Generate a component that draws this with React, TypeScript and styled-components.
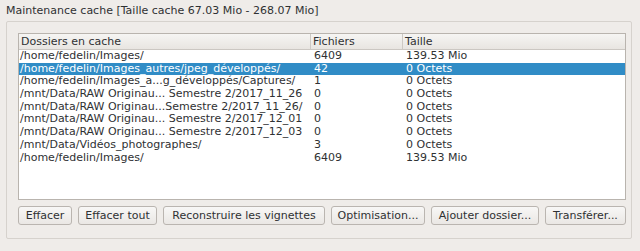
import React from 'react'
import styled, { createGlobalStyle } from 'styled-components'

const COLORS = {
  window: '#efece9',
  frame: '#d6d2cd',
  tableBorder: '#b9b4ae',
  text: '#2f3133',
  highlight: '#308cc6',
  headerTop: '#f6f5f3',
  headerBottom: '#e8e5e1',
}

const GlobalStyle = createGlobalStyle`
  html, body {
    margin: 0;
    padding: 0;
    background: ${COLORS.window};
  }
  body {
    font-family: "DejaVu Sans", "Noto Sans", sans-serif;
    font-size: 11px;
    color: ${COLORS.text};
  }
`

const Window = styled.div`
  width: 640px;
  height: 251px;
  box-sizing: border-box;
  padding: 4px 8px 0 6px;
  display: flex;
  flex-direction: column;
  overflow: hidden;
`

const Title = styled.div`
  height: 17px;
  line-height: 14px;
  white-space: nowrap;
`

const GroupBox = styled.div`
  height: 218px;
  box-sizing: border-box;
  border: 1px solid ${COLORS.frame};
  border-radius: 2px;
  padding: 11px 5px 0 11px;
  display: flex;
  flex-direction: column;
  gap: 6px;
`

const Table = styled.div`
  height: 167px;
  box-sizing: border-box;
  border: 1px solid ${COLORS.tableBorder};
  background: #ffffff;
  display: flex;
  flex-direction: column;
`

const Columns = styled.div`
  display: grid;
  grid-template-columns: 292px 92px 1fr;
`

const HeaderRow = styled(Columns)`
  height: 16px;
  box-sizing: border-box;
  background: linear-gradient(${COLORS.headerTop}, ${COLORS.headerBottom});
  border-bottom: 1px solid #cbc7c2;
`

const HeaderCell = styled.div<{ $last?: boolean }>`
  padding-left: 2px;
  line-height: 15px;
  white-space: nowrap;
  border-right: ${(p) => (p.$last ? 'none' : '1px solid #cdc9c4')};
`

const Row = styled(Columns)<{ $selected?: boolean }>`
  height: 12.7px;
  line-height: 12.7px;
  background: ${(p) => (p.$selected ? COLORS.highlight : 'transparent')};
  color: ${(p) => (p.$selected ? '#ffffff' : COLORS.text)};
`

const Cell = styled.div<{ $pad?: number }>`
  padding-left: ${(p) => p.$pad ?? 1}px;
  white-space: nowrap;
  overflow: hidden;
`

const Buttons = styled.div`
  display: flex;
  gap: 6px;
`

const Button = styled.button<{ $w: number }>`
  width: ${(p) => p.$w}px;
  height: 19px;
  box-sizing: border-box;
  padding: 0;
  border: 1px solid #bab5b0;
  border-radius: 3px;
  background: linear-gradient(#f8f7f6, #eae7e4);
  font-family: "DejaVu Sans", "Noto Sans", sans-serif;
  font-size: 11px;
  color: ${COLORS.text};
  line-height: 17px;
  white-space: nowrap;
`

const rows = [
  ['/home/fedelin/Images/', '6409', '139.53 Mio'],
  ['/home/fedelin/Images_autres/jpeg_développés/', '42', '0 Octets'],
  ['/home/fedelin/Images_a...g_développés/Captures/', '1', '0 Octets'],
  ['/mnt/Data/RAW Originau... Semestre 2/2017_11_26', '0', '0 Octets'],
  ['/mnt/Data/RAW Originau...Semestre 2/2017_11_26/', '0', '0 Octets'],
  ['/mnt/Data/RAW Originau... Semestre 2/2017_12_01', '0', '0 Octets'],
  ['/mnt/Data/RAW Originau... Semestre 2/2017_12_03', '0', '0 Octets'],
  ['/mnt/Data/Vidéos_photographes/', '3', '0 Octets'],
  ['/home/fedelin/Images/', '6409', '139.53 Mio'],
]

const buttons: [string, number][] = [
  ['Effacer', 54],
  ['Effacer tout', 79],
  ['Reconstruire les vignettes', 162],
  ['Optimisation...', 94],
  ['Ajouter dossier...', 108],
  ['Transférer...', 81],
]

export default function App() {
  return (
    <>
      <GlobalStyle />
      <Window>
        <Title>Maintenance cache [Taille cache 67.03 Mio - 268.07 Mio]</Title>
        <GroupBox>
          <Table>
            <HeaderRow>
              <HeaderCell>Dossiers en cache</HeaderCell>
              <HeaderCell>Fichiers</HeaderCell>
              <HeaderCell $last>Taille</HeaderCell>
            </HeaderRow>
            {rows.map((r, i) => (
              <Row key={i} $selected={i === 1}>
                <Cell>{r[0]}</Cell>
                <Cell $pad={3}>{r[1]}</Cell>
                <Cell $pad={3}>{r[2]}</Cell>
              </Row>
            ))}
          </Table>
          <Buttons>
            {buttons.map(([label, w]) => (
              <Button key={label} $w={w}>{label}</Button>
            ))}
          </Buttons>
        </GroupBox>
      </Window>
    </>
  )
}
